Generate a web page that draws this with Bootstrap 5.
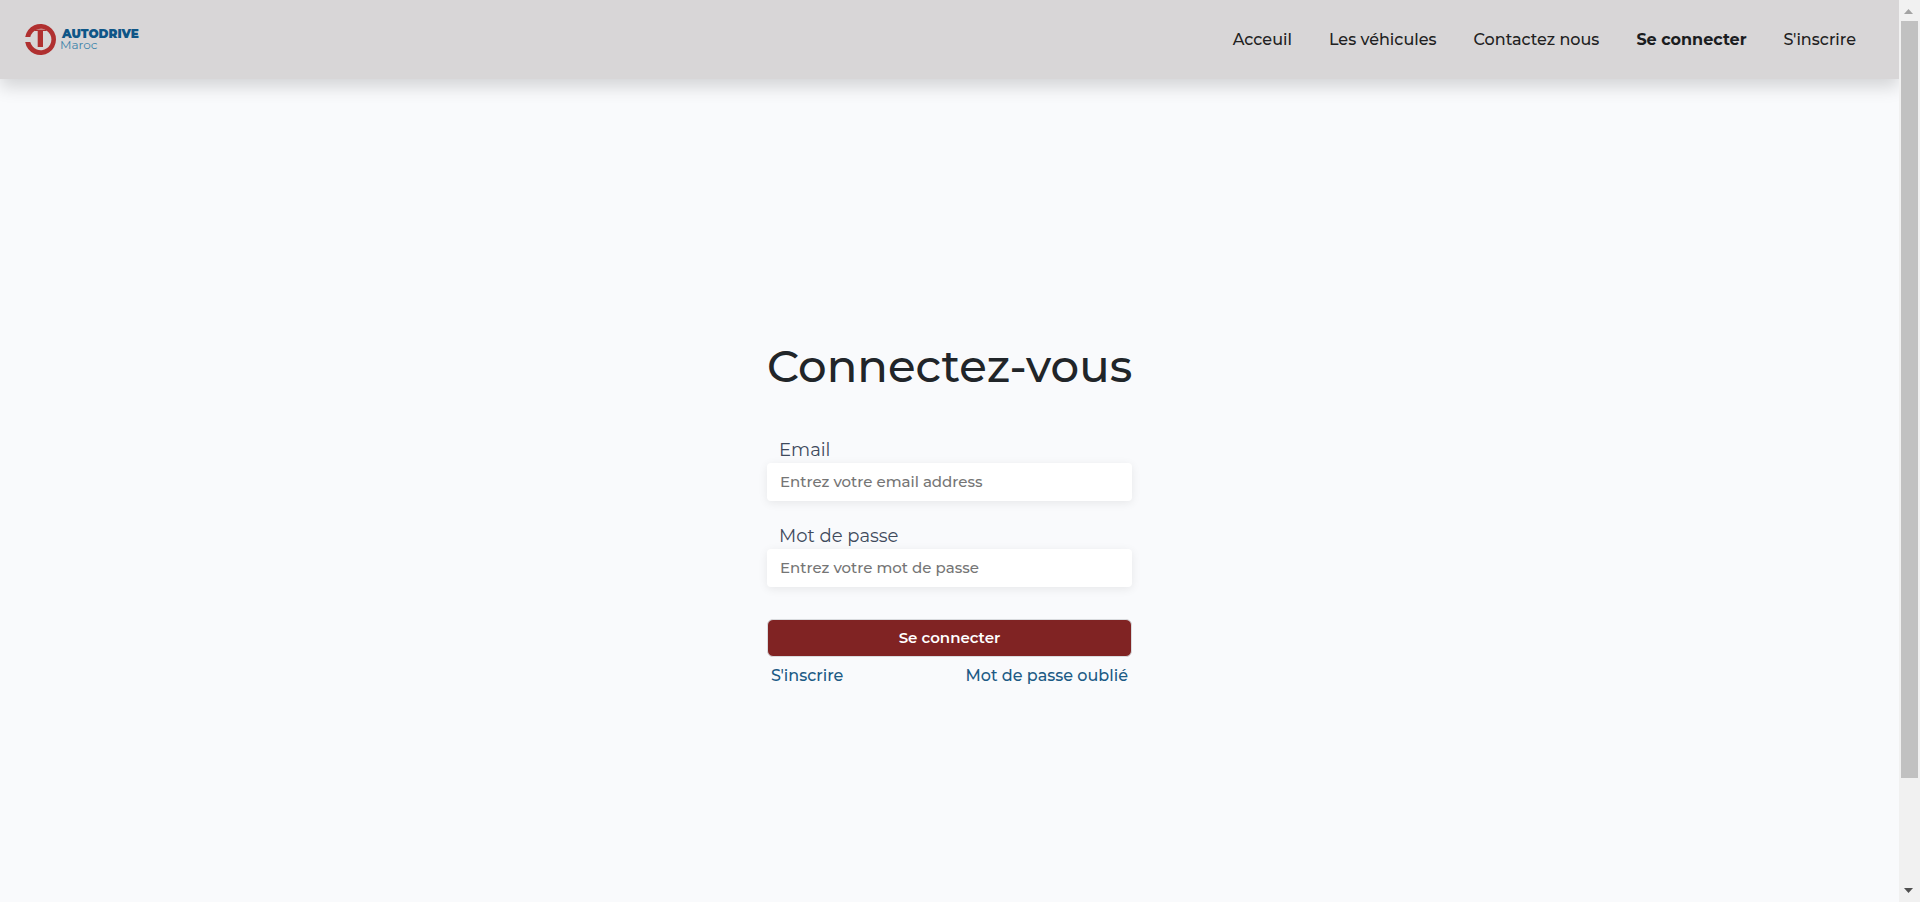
<!DOCTYPE html>
<html lang="fr">
<head>
<meta charset="utf-8">
<meta name="viewport" content="width=device-width, initial-scale=1">
<title>Autodrive Maroc - Connectez-vous</title>
<link href="https://cdn.jsdelivr.net/npm/bootstrap@5.3.0/dist/css/bootstrap.min.css" rel="stylesheet">
<style>
  body { font-family: Montserrat, Inter, sans-serif; font-weight: 500; background: #f9fafc; color: #212529; }
  .site-bar { background: #d8d6d7; height: 79px; padding: 0 43px 0 25px; box-shadow: 0 8px 16px rgba(0,0,0,.15); }
  .site-bar .nav { gap: 37px; }
  .site-bar .nav-link { font-size: 16px; line-height: 24px; color: #212121; padding: 0; }
  .site-bar .nav-link.active { font-weight: 700; color: #1b1d1f; }
  .login { padding-top: 260px; }
  .login-form { width: 365px; }
  .login-form h1 { font-size: 45px; line-height: 54px; font-weight: 500; margin-bottom: 45px; white-space: nowrap; }
  .login-form .form-label { display: block; font-size: 18px; font-weight: 400; line-height: 24px; color: #3f4a5c; margin: 0 0 1px; padding-left: 12px; }
  .login-form .form-control { height: 38px; border: 0; border-radius: 4px; padding: 0 13px 2px; font-size: 15px; font-weight: 500; background: #fff; box-shadow: 0 2px 10px rgba(0,0,0,.08); }
  .login-form .form-control::placeholder { color: #757575; }
  .field { margin-bottom: 23px; }
  .btn-login { height: 38px; margin-top: 9px; padding: 0; border: 1px solid #d9dbde; border-radius: 6px; background: #802323; color: #fff; font-size: 15px; font-weight: 600; }
  .links { margin-top: 7px; padding: 0 4px; line-height: 24px; font-size: 16px; }
  .links a { color: #1c5a85; }
  .scroll-rail { width: 21px; background: #f1f1f1; flex: none; }
  .scroll-thumb { background: #c1c1c1; width: 17px; margin-left: 2px; flex: 757 0 0; }
  .scroll-rest { flex: 103 0 0; }
</style>
</head>
<body>
<div class="d-flex min-vh-100">
  <div class="flex-fill overflow-hidden">
    <header class="site-bar d-flex align-items-center justify-content-between">
      <a href="#" aria-label="Autodrive Maroc">
        <svg width="116" height="35" viewBox="0 0 116 35" class="d-block">
          <path d="M0.200 15A15.500 15.500 0 1 1 0.200 20H5.300A10.700 10.700 0 1 0 5.300 15Z" fill="#b03030"/>
          <path d="M9.500 7.500H21.500V9H18V25H12.700V9H9.500Z" fill="#b03030"/>
          <text x="37" y="16" font-family="Montserrat, Inter, sans-serif" font-weight="900" font-size="12" fill="#0f5687">AUTODRIVE</text>
          <text x="35" y="27" font-family="Montserrat, Inter, sans-serif" font-weight="400" font-size="12" fill="#3d84aa">Maroc</text>
        </svg>
      </a>
      <nav class="nav">
        <a class="nav-link" href="#">Acceuil</a>
        <a class="nav-link" href="#">Les véhicules</a>
        <a class="nav-link" href="#">Contactez nous</a>
        <a class="nav-link active" aria-current="page" href="#">Se connecter</a>
        <a class="nav-link" href="#">S'inscrire</a>
      </nav>
    </header>
    <main class="login d-flex justify-content-center">
      <form class="login-form">
        <h1>Connectez-vous</h1>
        <div class="field">
          <label class="form-label" for="email">Email</label>
          <input class="form-control" id="email" type="email" placeholder="Entrez votre email address">
        </div>
        <div class="field">
          <label class="form-label" for="password">Mot de passe</label>
          <input class="form-control" id="password" type="password" placeholder="Entrez votre mot de passe">
        </div>
        <button class="btn btn-login w-100" type="submit">Se connecter</button>
        <div class="links d-flex justify-content-between">
          <a class="text-decoration-none" href="#">S'inscrire</a>
          <a class="text-decoration-none" href="#">Mot de passe oublié</a>
        </div>
      </form>
    </main>
  </div>
  <div class="scroll-rail d-flex flex-column" aria-hidden="true">
    <svg width="21" height="21"><path d="M5 14L9.500 9L14 14Z" fill="#a3a3a3"/></svg>
    <div class="scroll-thumb"></div>
    <div class="scroll-rest"></div>
    <svg width="21" height="21"><path d="M5 7L9.500 12L14 7Z" fill="#505050"/></svg>
  </div>
</div>
<script src="https://cdn.jsdelivr.net/npm/bootstrap@5.3.0/dist/js/bootstrap.bundle.min.js"></script>
</body>
</html>
